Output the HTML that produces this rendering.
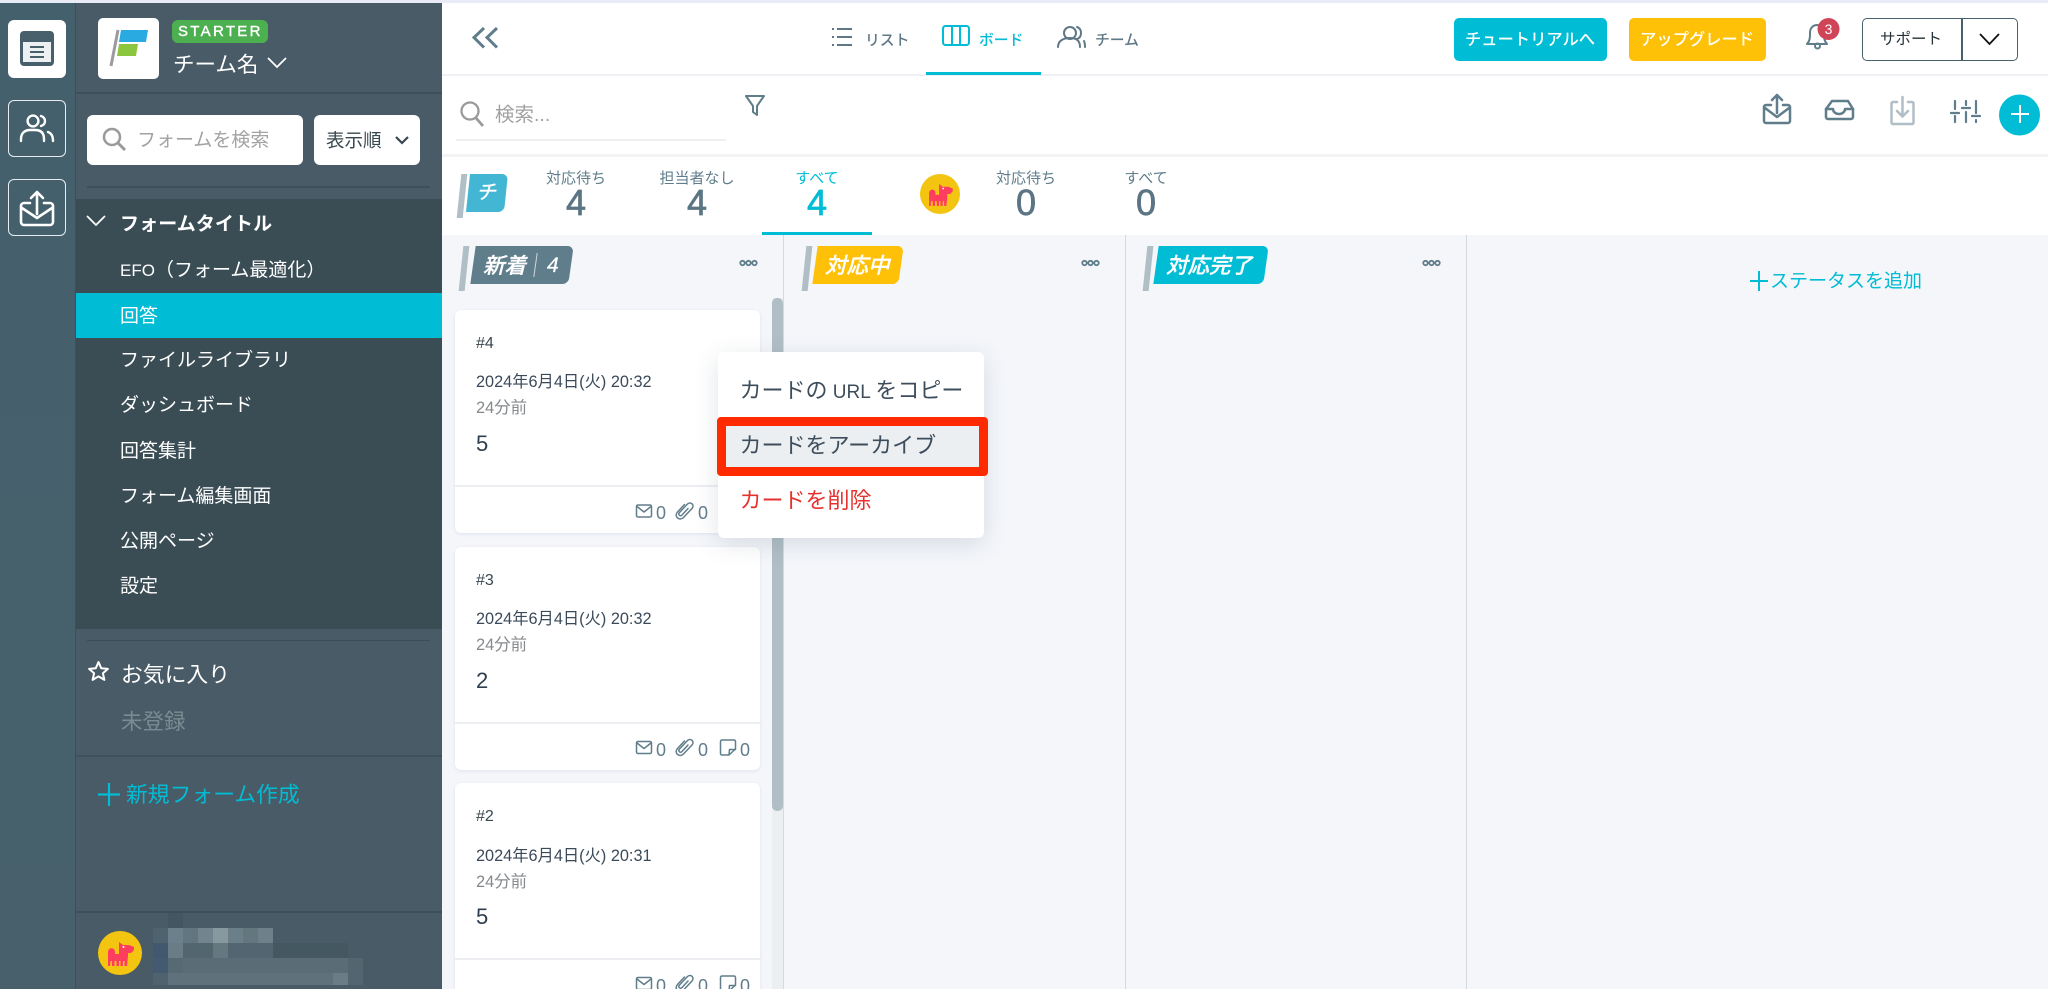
<!DOCTYPE html>
<html lang="ja"><head><meta charset="utf-8"><title>Board</title>
<style>
*{box-sizing:border-box;margin:0;padding:0}
html,body{width:2048px;height:989px;overflow:hidden;background:#fff}
body{position:relative;font-family:"Liberation Sans","Noto Sans CJK JP",sans-serif;color:#37474f}
.a{position:absolute}
.t{position:absolute;white-space:nowrap}
.c{position:absolute;white-space:nowrap;text-align:center;transform:translateX(-50%)}
.menu{position:absolute;left:120px;color:#fff;font-size:19px;line-height:30px;white-space:nowrap}
.card{position:absolute;left:455px;width:305px;background:#fff;border-radius:6px;box-shadow:0 1px 3px rgba(120,130,200,.16)}
.cl{position:absolute;left:-2px;right:-2px;height:2px;background:#eceef2}
.num{position:absolute;white-space:nowrap;font-size:18px;line-height:20px;color:#607d8b}
.lbl{position:absolute;white-space:nowrap;text-align:center;transform:translateX(-50%);font-size:15px;line-height:20px;color:#607d8b}
.big{position:absolute;white-space:nowrap;text-align:center;transform:translateX(-50%);font-size:36px;line-height:36px;color:#5b7584;-webkit-text-stroke:.7px currentColor}
.tag{position:absolute;top:246px;height:38px;transform:skewX(-8deg);border-radius:0 6px 6px 0}
.tagt{position:absolute;top:250px;color:#fff;font-size:21.500px;line-height:32px;font-weight:500;font-style:italic;white-space:nowrap;-webkit-text-stroke:.3px #fff}
.pole{position:absolute;top:246px;width:6px;height:45px;background:#b0bec5;transform:skewX(-6deg)}
.date{position:absolute;left:476px;white-space:nowrap;font-size:16.300px;line-height:22px;color:#3b4a5a}
.ago{position:absolute;left:476px;white-space:nowrap;font-size:16.400px;line-height:22px;color:#85898c}
.id{position:absolute;left:476px;white-space:nowrap;font-size:16px;line-height:22px;color:#37474f}
.val{position:absolute;left:476px;white-space:nowrap;font-size:22px;line-height:30px;color:#2f3e4e}
</style></head><body>

<div class="a" style="left:0;top:0;width:2048px;height:3px;background:#e9ecf6"></div>
<!-- left rail -->
<div class="a" style="left:0;top:3px;width:76px;height:986px;background:linear-gradient(#44606c,#47606c)"></div>
<!-- sidebar -->
<div class="a" style="left:76px;top:3px;width:366px;height:986px;background:#485b66"></div>
<div class="a" style="left:75px;top:3px;width:1px;height:986px;background:#3c505a"></div>
<div class="a" style="left:76px;top:92px;width:366px;height:2px;background:#3d4f59"></div>
<div class="a" style="left:87px;top:186px;width:343px;height:2px;background:#3d4f59"></div>
<div class="a" style="left:76px;top:199px;width:366px;height:430px;background:#3a4d55"></div>
<div class="a" style="left:76px;top:293px;width:366px;height:45px;background:#00bcd4"></div>
<div class="a" style="left:87px;top:640px;width:343px;height:1px;background:#3a4c56"></div>
<div class="a" style="left:76px;top:755px;width:366px;height:2px;background:#3f525c"></div>
<div class="a" style="left:76px;top:911px;width:366px;height:2px;background:#3d4f59"></div>

<!-- rail buttons -->
<div class="a" style="left:8px;top:20px;width:58px;height:58px;background:#fff;border-radius:6px"></div>
<div class="a" style="left:8px;top:100px;width:58px;height:57px;border:1.5px solid #e8edef;border-radius:6px"></div>
<div class="a" style="left:8px;top:179px;width:58px;height:57px;border:1.5px solid #e8edef;border-radius:6px"></div>

<!-- logo tile + team -->
<div class="a" style="left:98px;top:18px;width:61px;height:61px;background:#fff;border-radius:5px"></div>
<div class="a" style="left:172px;top:20px;width:96px;height:23px;background:#4caf50;border-radius:6px"></div>
<div class="t" style="left:178px;top:20px;font-size:15px;line-height:24px;letter-spacing:2.300px;color:#fff;-webkit-text-stroke:.4px #fff">STARTER</div>
<div class="t" style="left:173px;top:49px;font-size:21.500px;line-height:32px;color:#fff">チーム名</div>

<!-- search + sort -->
<div class="a" style="left:87px;top:115px;width:216px;height:50px;background:#fff;border-radius:6px"></div>
<div class="t" style="left:137px;top:125px;font-size:19px;line-height:32px;color:#a3a3a3;">フォームを検索</div>
<div class="a" style="left:314px;top:115px;width:106px;height:50px;background:#fff;border-radius:6px"></div>
<div class="t" style="left:326px;top:125px;font-size:18.500px;line-height:32px;color:#37474f">表示順</div>

<!-- menu -->
<div class="menu" style="top:210px;font-weight:700;letter-spacing:.1px;font-size:19px">フォームタイトル</div>
<div class="menu" style="top:256px"><span style="font-size:17px">EFO</span>（フォーム最適化）</div>
<div class="menu" style="top:302px">回答</div>
<div class="menu" style="top:346px">ファイルライブラリ</div>
<div class="menu" style="top:391px">ダッシュボード</div>
<div class="menu" style="top:437px">回答集計</div>
<div class="menu" style="top:482px">フォーム編集画面</div>
<div class="menu" style="top:527px">公開ページ</div>
<div class="menu" style="top:572px">設定</div>
<div class="menu" style="top:660px;font-size:21.800px;left:121px">お気に入り</div>
<div class="menu" style="top:707px;font-size:21.500px;left:121px;color:#7b8b93">未登録</div>
<div class="menu" style="top:780px;font-size:21.800px;left:126px;color:#00bcd4">新規フォーム作成</div>

<!-- header -->
<div class="a" style="left:442px;top:74px;width:1606px;height:2px;background:#eef0f3"></div>
<div class="a" style="left:926px;top:72px;width:115px;height:3px;background:#00bcd4"></div>
<div class="t" style="left:865px;top:30px;font-size:14.800px;line-height:22px;color:#5f7886;font-weight:500">リスト</div>
<div class="t" style="left:979px;top:30px;font-size:14.800px;line-height:22px;color:#00bcd4;font-weight:500">ボード</div>
<div class="t" style="left:1095px;top:30px;font-size:14.800px;line-height:22px;color:#5f7886;font-weight:500">チーム</div>

<div class="a" style="left:1454px;top:18px;width:153px;height:43px;background:#00bcd4;border-radius:5px"></div>
<div class="c" style="left:1530px;top:29px;font-size:16.300px;line-height:22px;color:#fff;font-weight:500">チュートリアルへ</div>
<div class="a" style="left:1629px;top:18px;width:137px;height:43px;background:#ffc107;border-radius:5px"></div>
<div class="c" style="left:1697px;top:29px;font-size:16.300px;line-height:22px;color:#fff;font-weight:500">アップグレード</div>
<div class="a" style="left:1862px;top:18px;width:156px;height:43px;border:1.5px solid #47606c;border-radius:5px;background:#fff"></div>
<div class="a" style="left:1961px;top:18px;width:1.5px;height:43px;background:#47606c"></div>
<div class="c" style="left:1911px;top:29px;font-size:15.500px;line-height:22px;color:#263238">サポート</div>

<!-- toolbar -->
<div class="a" style="left:442px;top:154px;width:1606px;height:3px;background:#f2f3f5"></div>
<div class="t" style="left:495px;top:100px;font-size:19.500px;line-height:30px;color:#a0a0a0">検索...</div>
<div class="a" style="left:456px;top:139px;width:270px;height:2px;background:#eeeff1"></div>

<!-- stats -->
<div class="a" style="left:459px;top:174px;width:6px;height:44px;background:#b0bec5;transform:skewX(-6deg)"></div>
<div class="a" style="left:468px;top:174px;width:38px;height:38px;background:#42b6d3;border-radius:0 6px 6px 0;transform:skewX(-6deg)"></div>
<div class="c" style="left:486px;top:178px;font-size:20px;line-height:30px;color:#fff;font-weight:500;font-style:italic">チ</div>
<div class="lbl" style="left:576px;top:169px">対応待ち</div><div class="big" style="left:576px;top:185px">4</div>
<div class="lbl" style="left:697px;top:169px">担当者なし</div><div class="big" style="left:697px;top:185px">4</div>
<div class="lbl" style="left:817px;top:169px;color:#00bcd4">すべて</div><div class="big" style="left:817px;top:185px;color:#00bcd4">4</div>
<div class="lbl" style="left:1026px;top:169px">対応待ち</div><div class="big" style="left:1026px;top:185px">0</div>
<div class="lbl" style="left:1146px;top:169px">すべて</div><div class="big" style="left:1146px;top:185px">0</div>
<div class="a" style="left:762px;top:232px;width:110px;height:3px;background:#00bcd4"></div>

<!-- board -->
<div class="a" style="left:442px;top:235px;width:1606px;height:754px;background:#f4f6fa"></div>
<div class="a" style="left:783px;top:235px;width:1px;height:754px;background:#d5dade"></div>
<div class="a" style="left:1125px;top:235px;width:1px;height:754px;background:#d5dade"></div>
<div class="a" style="left:1466px;top:235px;width:1px;height:754px;background:#d5dade"></div>
<div class="a" style="left:772px;top:298px;width:11px;height:691px;background:#eceff1"></div>
<div class="a" style="left:772px;top:298px;width:11px;height:513px;background:#b0bec5;border-radius:5px"></div>

<div class="pole" style="left:461px"></div>
<div class="tag" style="left:473px;width:98px;background:#607d8b"></div>
<div class="tagt" style="left:483px">新着</div>
<div class="a" style="left:535px;top:253px;width:1px;height:24px;background:#cfd8dc;transform:skewX(-8deg)"></div>
<div class="tagt" style="left:547px;font-size:21px">4</div>

<div class="pole" style="left:804px"></div>
<div class="tag" style="left:815px;width:86px;background:#ffc107"></div>
<div class="tagt" style="left:825px">対応中</div>

<div class="pole" style="left:1145px"></div>
<div class="tag" style="left:1156px;width:110px;background:#00bcd4"></div>
<div class="tagt" style="left:1166px">対応完了</div>

<div class="t" style="left:1770px;top:268px;font-size:19px;line-height:28px;color:#00bcd4">ステータスを追加</div>

<!-- cards -->
<div class="card" style="top:310px;height:223px"><div class="cl" style="top:175px"></div></div>
<div class="card" style="top:547px;height:223px"><div class="cl" style="top:175px"></div></div>
<div class="card" style="top:783px;height:223px"><div class="cl" style="top:175px"></div></div>

<div class="id" style="top:333px">#4</div>
<div class="date" style="top:371px">2024年6月4日(火) 20:32</div>
<div class="ago" style="top:397px">24分前</div>
<div class="val" style="top:429px">5</div>

<div class="id" style="top:570px">#3</div>
<div class="date" style="top:608px">2024年6月4日(火) 20:32</div>
<div class="ago" style="top:634px">24分前</div>
<div class="val" style="top:666px">2</div>

<div class="id" style="top:806px">#2</div>
<div class="date" style="top:845px">2024年6月4日(火) 20:31</div>
<div class="ago" style="top:871px">24分前</div>
<div class="val" style="top:902px">5</div>

<div class="num" style="left:656px;top:503px">0</div><div class="num" style="left:698px;top:503px">0</div>
<div class="num" style="left:656px;top:740px">0</div><div class="num" style="left:698px;top:740px">0</div><div class="num" style="left:740px;top:740px">0</div>
<div class="num" style="left:656px;top:976px">0</div><div class="num" style="left:698px;top:976px">0</div><div class="num" style="left:740px;top:976px">0</div>

<!-- icons -->
<svg class="a" style="left:0;top:0" width="2048" height="989" viewBox="0 0 2048 989" fill="none">
  <!-- rail 1 -->
  <rect x="20" y="31" width="34" height="35" rx="4" fill="#47606c"/>
  <rect x="23" y="42" width="28" height="20" fill="#eef1f2"/>
  <path d="M30 47h14M30 52h14M30 57h14" stroke="#47606c" stroke-width="2"/>
  <!-- rail 2 -->
  <g stroke="#fff" stroke-width="2.4" stroke-linecap="round">
    <circle cx="33" cy="121" r="5.4"/>
    <path d="M21 141v-2c0-6 4-9 9-9h5c6 0 9 3 9 9v2"/>
    <path d="M41 116c3 1 4 3 4 5s-1 4-4 5M48 132c3 1 5 4 5 9"/>
  </g>
  <!-- rail 3 -->
  <g stroke="#fff" stroke-width="2.6" stroke-linecap="round" stroke-linejoin="round">
    <path d="M30 203h-6a3 3 0 0 0-3 3v16a3 3 0 0 0 3 3h26a3 3 0 0 0 3-3v-16a3 3 0 0 0-3-3h-6"/>
    <path d="M22 208l15 10 15-10"/>
    <path d="M37 214v-21M31 198l6-6 6 6"/>
  </g>
  <!-- logo -->
  <path d="M118 30l-7 36" stroke="#9a9a9f" stroke-width="3"/>
  <path d="M121 30h27l-2 12h-27z" fill="#29abe2"/>
  <path d="M119 44h19l-2 12h-19z" fill="#8cc63f"/>
  <path d="M268 58l9 9 9-9" stroke="#fff" stroke-width="1.8"/>
  <!-- search sidebar -->
  <circle cx="112" cy="137" r="8" stroke="#9a9a9a" stroke-width="2.5"/>
  <path d="M118 143l7 7" stroke="#9a9a9a" stroke-width="3"/>
  <path d="M396 137l6 6 6-6" stroke="#37474f" stroke-width="2.2"/>
  <!-- tree chevron -->
  <path d="M87 216l9 9 9-9" stroke="#fff" stroke-width="1.8"/>
  <!-- star -->
  <path d="M98.500 662l2.700 6.200 6.700.7-5 4.400 1.500 6.600-5.900-3.500-5.900 3.500 1.500-6.600-5-4.400 6.700-.7z" stroke="#fff" stroke-width="2" stroke-linejoin="round"/>
  <!-- new form plus -->
  <path d="M98 794.500h22M109 783v23" stroke="#00bcd4" stroke-width="2.200"/>
  <!-- pixelated name -->
  <g shape-rendering="crispEdges">
    <rect x="168" y="913" width="15" height="15" fill="#435761"/>
    <rect x="153" y="928" width="15" height="15" fill="#4f636e"/><rect x="168" y="928" width="15" height="15" fill="#6b808a"/><rect x="183" y="928" width="15" height="15" fill="#62767f"/><rect x="198" y="928" width="15" height="15" fill="#72858e"/><rect x="213" y="928" width="15" height="15" fill="#87989f"/><rect x="228" y="928" width="15" height="15" fill="#6b7f88"/><rect x="243" y="928" width="15" height="15" fill="#63777f"/><rect x="258" y="928" width="15" height="15" fill="#6e818a"/>
    <rect x="153" y="943" width="15" height="15" fill="#42586f"/><rect x="168" y="943" width="15" height="15" fill="#6a7d86"/><rect x="183" y="943" width="30" height="15" fill="#526670"/><rect x="213" y="943" width="15" height="15" fill="#64787f"/><rect x="228" y="943" width="45" height="15" fill="#526570"/><rect x="273" y="943" width="75" height="15" fill="#445862"/>
    <rect x="153" y="958" width="15" height="15" fill="#435a70"/><rect x="168" y="958" width="15" height="15" fill="#566a74"/><rect x="183" y="958" width="165" height="15" fill="#5a6d77"/><rect x="348" y="958" width="15" height="15" fill="#536670"/>
    <rect x="153" y="973" width="15" height="12" fill="#4f636e"/><rect x="168" y="973" width="165" height="12" fill="#5f727c"/><rect x="333" y="973" width="15" height="12" fill="#6a7c85"/><rect x="348" y="973" width="15" height="12" fill="#526570"/>
  </g>
  <!-- avatar -->
  <g><circle cx="120" cy="953" r="22" fill="#f4c510"/>
  <path d="M108 966v-14c0-5 7-5 7 0v2h4v-12l4 3h6l5 2v3l-3 3h-3v3l-1 10h-2.500v-5h-1.500v5h-2.500v-5h-1.500v5h-2.500v-5h-2v5h-2.500v-5h-2v5zM110.500 966v-13c0-1.500 2-1.500 2 0v3h-1" fill="#ff3d5e"/>
  <circle cx="123.500" cy="947" r="1" fill="#fff"/></g>
  <g transform="translate(940,194) scale(.91) translate(-120,-953)"><circle cx="120" cy="953" r="22" fill="#f4c510"/>
  <path d="M108 966v-14c0-5 7-5 7 0v2h4v-12l4 3h6l5 2v3l-3 3h-3v3l-1 10h-2.500v-5h-1.500v5h-2.500v-5h-1.500v5h-2.500v-5h-2v5h-2.500v-5h-2v5z" fill="#ff3d5e"/>
  <circle cx="123.500" cy="947" r="1" fill="#fff"/></g>
  <!-- header icons -->
  <path d="M484 28l-10 9.500 10 10M497 28l-10 9.500 10 10" stroke="#607d8b" stroke-width="3"/>
  <path d="M837 29h15M837 37h15M837 45h15" stroke="#5f7886" stroke-width="2"/>
  <path d="M832 29h2M832 37h2M832 45h2" stroke="#5f7886" stroke-width="2"/>
  <rect x="943" y="26" width="26" height="19" rx="2.500" stroke="#00bcd4" stroke-width="2"/>
  <path d="M952 26v19M960 26v19" stroke="#00bcd4" stroke-width="2"/>
  <g stroke="#5f7886" stroke-width="2" stroke-linecap="round">
    <circle cx="1070" cy="33" r="6"/>
    <path d="M1058 47c0-6 5-9 12-9s10 3 10 9"/>
    <path d="M1077 27c3 1 4 3 4 6s-1 5-4 6M1084 41c.7 1.500 1 3.500 1 6"/>
  </g>
  <!-- bell -->
  <path d="M1807 44c3-3 3-7 3-11 0-6 4-8 7-8s7 2 7 8c0 4 0 8 3 11z" stroke="#607d8b" stroke-width="2" stroke-linejoin="round"/>
  <circle cx="1817.500" cy="46" r="2.500" stroke="#607d8b" stroke-width="2"/>
  <circle cx="1828.500" cy="29" r="11" fill="#cf4457"/>
  <text x="1828.500" y="34" text-anchor="middle" font-size="14" fill="#fff" font-family="Liberation Sans, sans-serif">3</text>
  <path d="M1980 34l9.500 10 9.500-10" stroke="#111" stroke-width="1.800"/>
  <!-- toolbar search + filter -->
  <circle cx="470" cy="111" r="8.500" stroke="#9a9a9a" stroke-width="2.300"/>
  <path d="M476 118l7 8" stroke="#9a9a9a" stroke-width="2.800"/>
  <path d="M746 96h18l-7 10v9l-4-3v-6z" stroke="#607d8b" stroke-width="2" stroke-linejoin="round"/>
  <!-- export -->
  <g stroke="#607d8b" stroke-width="2.500" stroke-linecap="round" stroke-linejoin="round">
    <path d="M1771 105h-5a2 2 0 0 0-2 2v14a2 2 0 0 0 2 2h22a2 2 0 0 0 2-2v-14a2 2 0 0 0-2-2h-5"/>
    <path d="M1765 108l12 9 12-9"/>
    <path d="M1777 113v-17M1772 100l5-5 5 5"/>
    <!-- inbox -->
    <path d="M1826 109l6-8h16l5 8v8a2 2 0 0 1-2 2h-23a2 2 0 0 1-2-2z"/>
    <path d="M1826 109h7c0 3 3 5 6 5s6-2 6-5h8"/>
    <!-- sliders -->
    <path d="M1955 101v8M1955 116v6M1951 113h8M1966 101v4M1966 112v10M1962 108h8M1976 101v12M1976 120v2M1972 116h8" stroke-width="2.200"/>
  </g>
  <g stroke="#b0bec5" stroke-width="2.500" stroke-linecap="round" stroke-linejoin="round">
    <path d="M1897 102h-4a1.500 1.500 0 0 0-1.500 1.500v19a1.500 1.500 0 0 0 1.500 1.500h19a1.500 1.500 0 0 0 1.500-1.500v-19a1.500 1.500 0 0 0-1.500-1.500h-4"/>
    <path d="M1902.500 97v19M1897 111l5.500 5.500 5.500-5.500"/>
  </g>
  <circle cx="2019.500" cy="115" r="20.500" fill="#00bcd4"/>
  <path d="M2011 114h18M2020 105v18" stroke="#fff" stroke-width="2"/>
  <!-- dots -->
  <g stroke="#607d8b" stroke-width="1.800">
    <circle cx="742.500" cy="263" r="2.200"/><circle cx="748.500" cy="263" r="2.200"/><circle cx="754.500" cy="263" r="2.200"/>
    <circle cx="1084.500" cy="263" r="2.200"/><circle cx="1090.500" cy="263" r="2.200"/><circle cx="1096.500" cy="263" r="2.200"/>
    <circle cx="1425.500" cy="263" r="2.200"/><circle cx="1431.500" cy="263" r="2.200"/><circle cx="1437.500" cy="263" r="2.200"/>
  </g>
  <!-- add status plus -->
  <path d="M1750 281h18M1759 271v20" stroke="#00bcd4" stroke-width="2"/>
  <!-- card footers -->
  <g stroke="#607d8b" stroke-width="1.500" stroke-linejoin="round" stroke-linecap="round">
    <rect x="636.500" y="505" width="15" height="12" rx="1.500"/><path d="M637 506.500l7 5.500 7-5.500"/>
    <path d="M688 745l-6 6.500c-1.800 2-4.300-.5-2.500-2.500l8-8.500c3-3 7.500 1 4.500 4.500l-8.500 9c-4 4-10-1-6-5.500l7-7.500" transform="translate(0,-236.500)"/>
    <rect x="636.500" y="741.500" width="15" height="12" rx="1.500"/><path d="M637 743l7 5.500 7-5.500"/>
    <path d="M688 745l-6 6.500c-1.800 2-4.300-.5-2.500-2.500l8-8.500c3-3 7.500 1 4.500 4.500l-8.500 9c-4 4-10-1-6-5.500l7-7.500"/>
    <path d="M729 755h-7a1.500 1.500 0 0 1-1.500-1.500v-12a1.500 1.500 0 0 1 1.500-1.500h12a1.500 1.500 0 0 1 1.500 1.500v7.500zM729 755l.5-5.500h6"/>
    <rect x="636.500" y="977.500" width="15" height="12" rx="1.500"/><path d="M637 979l7 5.500 7-5.500"/>
    <path d="M688 745l-6 6.500c-1.800 2-4.300-.5-2.500-2.500l8-8.500c3-3 7.500 1 4.500 4.500l-8.500 9c-4 4-10-1-6-5.500l7-7.500" transform="translate(0,236)"/>
    <path d="M729 991h-7a1.500 1.500 0 0 1-1.500-1.500v-12a1.500 1.500 0 0 1 1.500-1.500h12a1.500 1.500 0 0 1 1.500 1.500v7.500zM729 991l.5-5.500h6"/>
  </g>
</svg>

<!-- context menu -->
<div class="a" style="left:718px;top:352px;width:266px;height:186px;background:#fff;border-radius:6px;box-shadow:0 6px 24px rgba(70,85,110,.16)"></div>
<div class="a" style="left:717px;top:417px;width:271px;height:59px;background:#eceff1;border:9.500px solid #ff2a00;border-radius:4px"></div>
<div class="t" style="left:739.500px;top:374px;font-size:22px;line-height:34px;color:#3d4d5c">カードの<span style="font-size:19px"> URL </span>をコピー</div>
<div class="t" style="left:739.500px;top:429px;font-size:22px;line-height:34px;color:#3d4d5c">カードをアーカイブ</div>
<div class="t" style="left:739.500px;top:484px;font-size:22px;line-height:34px;color:#e5322e">カードを削除</div>
</body></html>
